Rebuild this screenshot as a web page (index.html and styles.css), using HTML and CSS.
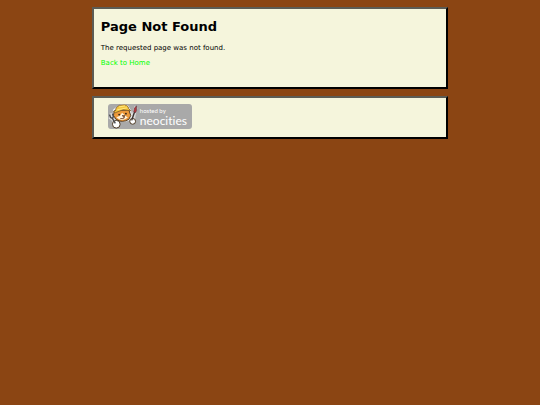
FILE: index.html
```
<!DOCTYPE html>
<html lang="en">
<head>
<meta charset="utf-8">
<meta name="viewport" content="width=device-width, initial-scale=1">
<title>Page Not Found</title>
<link rel="stylesheet" href="styles.css">
</head>
<body>
<div class="page">
  <main class="panel content">
    <h1>Page Not Found</h1>
    <p>The requested page was not found.</p>
    <p><a href="/">Back to Home</a></p>
  </main>
  <footer class="panel footer">
    <a class="host" href="/">
      <svg class="mascot" viewBox="0 0 32 27" aria-hidden="true">
        <!-- white outline behind the figure -->
        <path d="M1 10L4 9L6 15L9 18L6 22L3 17L0 15ZM27 2L30 4L28 12L27 20L22 19L24 11Z" fill="#ddd"/>
        <path d="M5 6L9 3Q14-1 20 2L23 7L24 13L21 17L16 18L8 16L5 12Z" fill="#fff" stroke="#eee" stroke-width="1"/>
        <circle cx="8" cy="21" r="4" fill="#fff" stroke="#49351f"/>
        <circle cx="25" cy="18" r="3" fill="#fff" stroke="#49351f"/>
        <!-- face -->
        <path d="M6 7L5 12L8 16Q14 20 21 16L23 12L21 6Z" fill="#ec993b" stroke="#49351f"/>
        <path d="M14 9L17 12L20 14Q14 19 8 14L12 12Z" fill="#fff3dc"/>
        <circle cx="11" cy="11" r="1" fill="#38281b"/>
        <circle cx="18" cy="10" r="1" fill="#38281b"/>
        <path d="M14 12h3l-1 2zM12 15q3 1 5-1" fill="#ae5936" stroke="#49351f" stroke-width=".6"/>
        <!-- hard hat -->
        <path d="M7 7Q8 1 14 1Q20 0 21 5L23 7L15 6L7 9L5 8Z" fill="#f5c63d" stroke="#795626" stroke-width=".8"/>
        <path d="M11 3L17 2M9 6L19 4" stroke="#ffe77f"/>
        <!-- wrench and brush -->
        <path d="M1 11L2 14L4 15L7 20M4 10L5 13L4 15" fill="none" stroke="#4c4d50" stroke-width="1.500"/>
        <path d="M24 17L27 8" stroke="#3d3533" stroke-width="1.500"/>
        <path d="M26 8L27 4L29 2V7L28 9Z" fill="#b5363d" stroke="#59313a" stroke-width=".6"/>
      </svg>
      <span class="wordmark">
        <span class="hosted">hosted by</span>
        <span class="brand">neocities</span>
      </span>
    </a>
  </footer>
</div>
</body>
</html>
```
FILE: styles.css
```
* {
  box-sizing: border-box;
}

body {
  margin: 0;
  background: #8b4513;
  color: #000;
  font: 7px/9px Verdana, "DejaVu Sans", sans-serif;
}

.page {
  display: flex;
  flex-direction: column;
  gap: 7px;
  width: 66%;
  max-width: 534px;
  margin: 7px auto;
}

.panel {
  background: beige;
  border: 2px solid #000;
  border-top-color: #5c5c55;
  border-left-color: #5c5c55;
}

.content {
  padding: 10px 7px 13px;
}

h1 {
  margin: 0 0 9px;
  font-size: 13px;
  line-height: 16px;
}

p {
  margin: 0 0 6px;
}

a {
  color: #0f0;
  text-decoration: none;
}

.footer {
  display: flex;
  padding: 6px 14px 8px;
}

.host {
  display: flex;
  width: 84px;
  height: 25px;
  border-radius: 3px;
  background: #a9a9a9;
  color: #fff;
  font-family: Lato, sans-serif;
  font-variant-ligatures: none;
}

.mascot {
  flex: none;
  width: 32px;
  height: 26px;
}

.wordmark {
  display: flex;
  flex-direction: column;
  padding-top: 3px;
}

.hosted {
  font-size: 6px;
  line-height: 8px;
}

.brand {
  font-size: 12px;
  line-height: 12px;
}
```
